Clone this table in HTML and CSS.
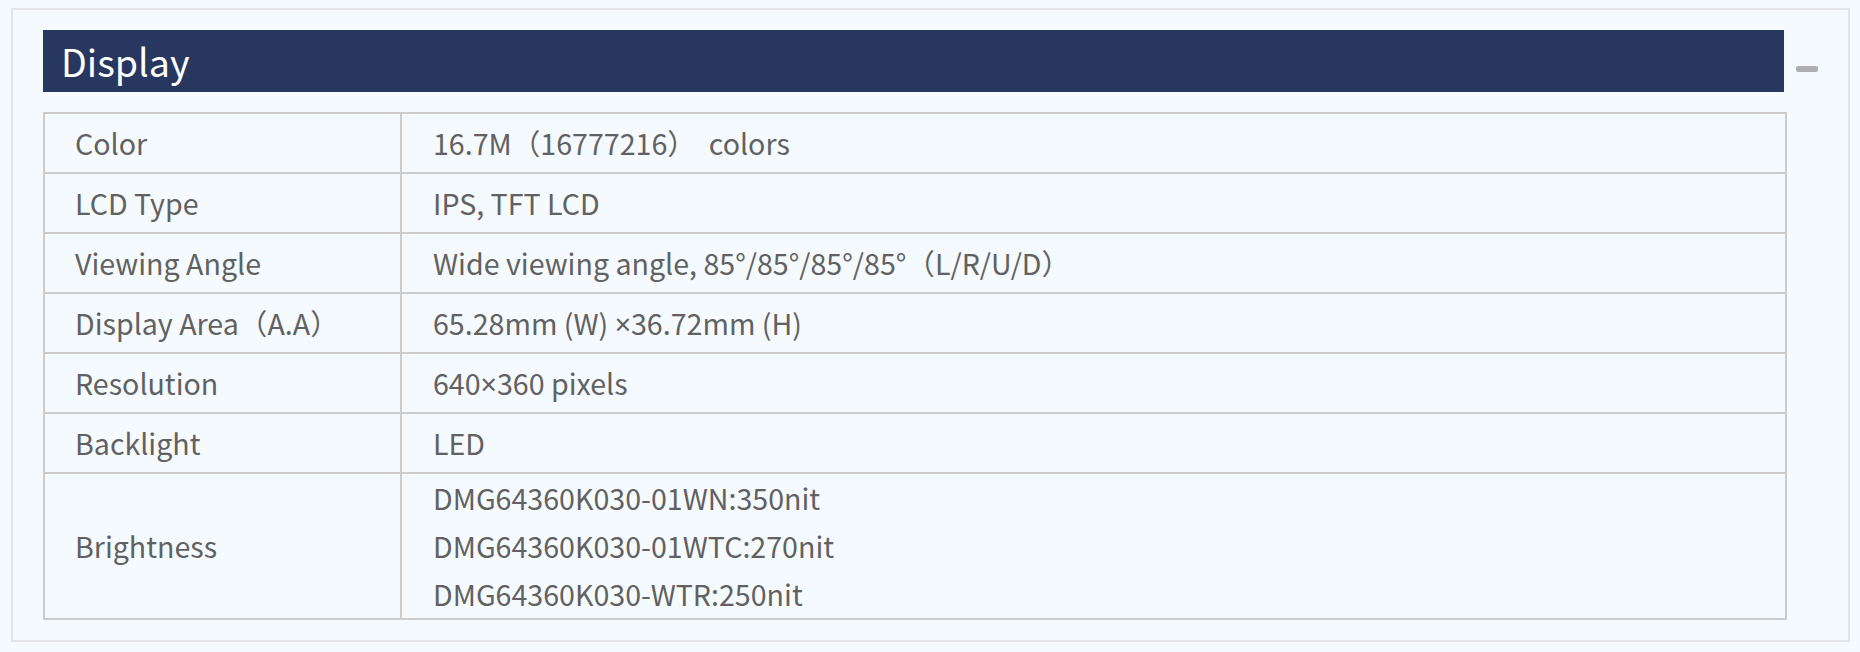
FILE: index.html
```html
<!DOCTYPE html>
<html lang="en">
<head>
<meta charset="utf-8">
<title>Display</title>
<link rel="stylesheet" href="styles.css">
</head>
<body>
<section class="panel">
  <div class="panel-main">
    <h2 class="panel-title">Display</h2>
    <table class="spec">
      <tr><td class="spec-label">Color</td><td class="spec-value">16.7M（16777216）&nbsp; colors</td></tr>
      <tr><td class="spec-label">LCD Type</td><td class="spec-value">IPS, TFT LCD</td></tr>
      <tr><td class="spec-label">Viewing Angle</td><td class="spec-value">Wide viewing angle, 85°/85°/85°/85°（L/R/U/D）</td></tr>
      <tr><td class="spec-label">Display Area（A.A）</td><td class="spec-value">65.28mm (W) <span class="times">×</span>36.72mm (H)</td></tr>
      <tr><td class="spec-label">Resolution</td><td class="spec-value">640<span class="times">×</span>360 pixels</td></tr>
      <tr><td class="spec-label">Backlight</td><td class="spec-value">LED</td></tr>
      <tr><td class="spec-label">Brightness</td><td class="spec-value spec-multi"><div>DMG64360K030-01WN:350nit</div><div>DMG64360K030-01WTC:270nit</div><div>DMG64360K030-WTR:250nit</div></td></tr>
    </table>
  </div>
  <div class="panel-aside">
    <span class="collapse-btn" aria-label="collapse"></span>
  </div>
</section>
</body>
</html>
```
FILE: styles.css
```css
html, body {
  margin: 0;
  padding: 0;
  background: #f5faff;
}
body {
  font-family: "Noto Sans CJK SC", "Noto Sans", sans-serif;
  color: #616161;
}
.panel {
  box-sizing: border-box;
  margin: 8px 10px 0 11px;
  width: 1839px;
  height: 634px;
  border: 2px solid #e2e4e6;
  padding: 20px 0 0 30px;
  display: flex;
}
.panel-main {
  width: 1744px;
}
.panel-title {
  margin: 0 3px 0 0;
  height: 62px;
  background: #283760;
  color: #ffffff;
  font-size: 37.6px;
  font-weight: 400;
  line-height: 62px;
  padding-left: 18px;
}
.spec {
  margin-top: 20px;
  width: 1744px;
  border-collapse: collapse;
  font-size: 28.6px;
}
.spec td {
  border: 2px solid #cccccc;
  padding: 5px 0 5px 30px;
  height: 48px;
  line-height: 48px;
  vertical-align: middle;
  white-space: nowrap;
}
.spec .spec-label {
  width: 325px;
}
.spec .spec-value {
  padding-left: 31px;
}
.spec .spec-multi {
  padding-top: 0;
  padding-bottom: 0;
}
.times {
  font-family: "Noto Sans", sans-serif;
  line-height: 1;
}
.panel-aside {
  padding: 36px 0 0 9px;
}
.collapse-btn {
  display: block;
  width: 22px;
  height: 6px;
  border-radius: 2px;
  background: #aeafb1;
}
```
